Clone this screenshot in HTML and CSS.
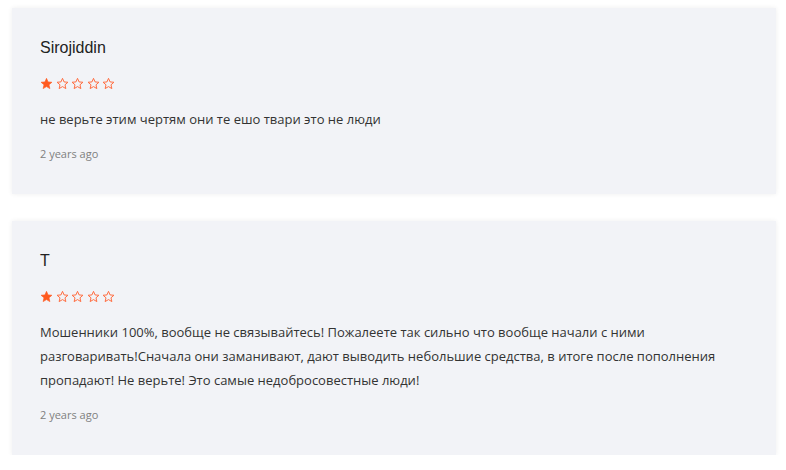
FILE: index.html
```html
<!DOCTYPE html>
<html lang="ru">
<head>
<meta charset="utf-8">
<link rel="stylesheet" href="styles.css">
</head>
<body>
<div class="reviews">
  <div class="card">
    <div class="name">Sirojiddin</div>
    <div class="stars">
      <svg class="star" viewBox="0 0 24 24"><path class="full" d="M12 2.5l2.9 6.6 7.1.6-5.4 4.7 1.6 7-6.2-3.7-6.2 3.7 1.6-7L2 9.7l7.1-.6z"/></svg>
      <svg class="star" viewBox="0 0 24 24"><path class="empty" d="M12 2.5l2.9 6.6 7.1.6-5.4 4.7 1.6 7-6.2-3.7-6.2 3.7 1.6-7L2 9.7l7.1-.6z"/></svg>
      <svg class="star" viewBox="0 0 24 24"><path class="empty" d="M12 2.5l2.9 6.6 7.1.6-5.4 4.7 1.6 7-6.2-3.7-6.2 3.7 1.6-7L2 9.7l7.1-.6z"/></svg>
      <svg class="star" viewBox="0 0 24 24"><path class="empty" d="M12 2.5l2.9 6.6 7.1.6-5.4 4.7 1.6 7-6.2-3.7-6.2 3.7 1.6-7L2 9.7l7.1-.6z"/></svg>
      <svg class="star" viewBox="0 0 24 24"><path class="empty" d="M12 2.5l2.9 6.6 7.1.6-5.4 4.7 1.6 7-6.2-3.7-6.2 3.7 1.6-7L2 9.7l7.1-.6z"/></svg>
    </div>
    <p class="text">не верьте этим чертям они те ешо твари это не люди</p>
    <div class="date">2 years ago</div>
  </div>
  <div class="card">
    <div class="name">T</div>
    <div class="stars">
      <svg class="star" viewBox="0 0 24 24"><path class="full" d="M12 2.5l2.9 6.6 7.1.6-5.4 4.7 1.6 7-6.2-3.7-6.2 3.7 1.6-7L2 9.7l7.1-.6z"/></svg>
      <svg class="star" viewBox="0 0 24 24"><path class="empty" d="M12 2.5l2.9 6.6 7.1.6-5.4 4.7 1.6 7-6.2-3.7-6.2 3.7 1.6-7L2 9.7l7.1-.6z"/></svg>
      <svg class="star" viewBox="0 0 24 24"><path class="empty" d="M12 2.5l2.9 6.6 7.1.6-5.4 4.7 1.6 7-6.2-3.7-6.2 3.7 1.6-7L2 9.7l7.1-.6z"/></svg>
      <svg class="star" viewBox="0 0 24 24"><path class="empty" d="M12 2.5l2.9 6.6 7.1.6-5.4 4.7 1.6 7-6.2-3.7-6.2 3.7 1.6-7L2 9.7l7.1-.6z"/></svg>
      <svg class="star" viewBox="0 0 24 24"><path class="empty" d="M12 2.5l2.9 6.6 7.1.6-5.4 4.7 1.6 7-6.2-3.7-6.2 3.7 1.6-7L2 9.7l7.1-.6z"/></svg>
    </div>
    <p class="text">Мошенники 100%, вообще не связывайтесь! Пожалеете так сильно что вообще начали с ними разговаривать!&#8288;Сначала они заманивают, дают выводить небольшие средства, в итоге после пополнения пропадают! Не верьте! Это самые недобросовестные люди!</p>
    <div class="date">2 years ago</div>
  </div>
</div>
</body>
</html>
```
FILE: styles.css
```css
html, body {
  margin: 0;
  padding: 0;
  background: #ffffff;
}

.reviews {
  display: flex;
  flex-direction: column;
  gap: 27px;
  padding: 8px 10px 0 12px;
}

.card {
  background: #f2f3f7;
  box-shadow: 0 0 5px rgba(0, 0, 0, 0.07);
  padding: 29px 28px 32px 28px;
  display: flex;
  flex-direction: column;
}

.name {
  font-family: "Liberation Sans", Arial, sans-serif;
  font-size: 16px;
  line-height: 22px;
  color: #222;
}

.stars {
  display: flex;
  gap: 2.5px;
  margin-top: 17px;
  height: 14px;
  align-items: center;
}

.star {
  width: 13px;
  height: 13px;
  display: block;
}

.star .full {
  fill: #ff5a1f;
  stroke: #ff5a1f;
  stroke-width: 1.2;
  stroke-linejoin: round;
}

.star .empty {
  fill: none;
  stroke: #ff6a3d;
  stroke-width: 1.8;
  stroke-linejoin: round;
}

.text {
  margin: 17px 0 0 0;
  font-family: "Open Sans", sans-serif;
  font-size: 13px;
  line-height: 24px;
  color: #333;
}

.date {
  margin-top: 15px;
  font-family: "Open Sans", sans-serif;
  font-size: 11px;
  line-height: 16px;
  font-weight: 400;
  color: #808080;
}
```
